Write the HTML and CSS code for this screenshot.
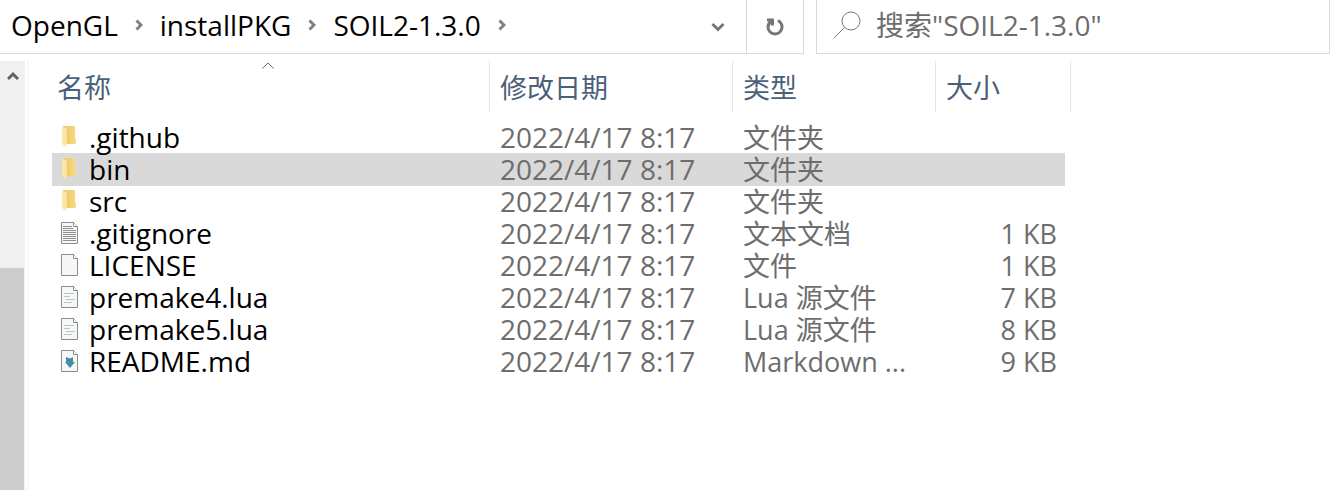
FILE: index.html
```html
<!DOCTYPE html>
<html lang="zh-CN">
<head>
<meta charset="utf-8">
<title>SOIL2-1.3.0</title>
<link rel="stylesheet" href="styles.css">
</head>
<body>
<svg class="defs" aria-hidden="true">
  <defs>
    <linearGradient id="front" x1="0" x2="1"><stop offset="0" stop-color="#ffe9a2"/><stop offset="1" stop-color="#fce49a"/></linearGradient>
    <linearGradient id="back" x1="0" x2="1"><stop offset="0" stop-color="#e8c468"/><stop offset="1" stop-color="#fbda7c"/></linearGradient>
  </defs>
  <symbol id="folder" viewBox="0 0 18 22">
    <path fill="url(#back)" d="M2 0H14V12L15 13V18H4Z"/>
    <path fill="url(#front)" d="M1 0L5 2Q6 2.500 6 4V17L5 18V21L1 18Z"/>
  </symbol>
  <symbol id="page" viewBox="0 0 18 22">
    <path fill="#f6f7f7" stroke="#8c8c8c" d="M.5.500H12.500L16.500 4.500V21.500H.5Z"/>
    <path fill="#fff" stroke="#8c8c8c" d="M12.500.500V4.500H16.500"/>
  </symbol>
  <symbol id="text" viewBox="0 0 18 22">
    <use href="#page"/>
    <path stroke="#8f8f8f" d="M2 4.500H11M2 6.500H12M2 8.500H15M2 10.500H15M2 12.500H15M2 14.500H15M2 16.500H15M2 18.500H15"/>
  </symbol>
  <symbol id="code" viewBox="0 0 18 22">
    <use href="#page"/>
    <path stroke="#bfc4c4" d="M3 7.500H13M3 10.500H9M5 13.500H14M3 16.500H11"/>
  </symbol>
  <symbol id="markdown" viewBox="0 0 18 22">
    <use href="#page"/>
    <path fill="#458bab" d="M5 7L9 8.500L12 7V12H14L9 18L4 12H5Z"/>
  </symbol>
</svg>
<header class="toolbar">
  <div class="address">
    <nav class="crumbs">
      <a href="#">OpenGL</a>
      <svg class="chevron" viewBox="0 0 8 12"><path d="M1.500 1.500L6 6L1.500 10.500"/></svg>
      <a href="#">installPKG</a>
      <svg class="chevron" viewBox="0 0 8 12"><path d="M1.500 1.500L6 6L1.500 10.500"/></svg>
      <a href="#">SOIL2-1.3.0</a>
      <svg class="chevron" viewBox="0 0 8 12"><path d="M1.500 1.500L6 6L1.500 10.500"/></svg>
    </nav>
    <button class="history" aria-label="以前的位置"><svg width="14" height="10" viewBox="0 0 14 10"><path d="M1.500 2L7 7.500L12.500 2"/></svg></button>
    <button class="refresh" aria-label="刷新"><svg width="18" height="18" viewBox="0 0 18 18"><path d="M1 2H6.500V7.500M5.500 3Q2 5.500 2 9A7 7 0 0 0 16 9Q16 5 12 2.500"/></svg></button>
  </div>
  <label class="search">
    <svg width="28" height="28" viewBox="0 0 28 28"><circle cx="18" cy="10" r="9"/><path d="M11.500 16.500L1 27"/></svg>
    <input type="search" aria-label="搜索" placeholder="搜索&quot;SOIL2-1.3.0&quot;">
  </label>
</header>
<main class="content">
  <div class="scrollbar">
    <button class="up" aria-label="向上滚动"><svg width="12" height="10" viewBox="0 0 12 10"><path d="M1 8L6 3L11 8"/></svg></button>
    <div class="thumb"></div>
  </div>
  <section class="files">
    <table>
      <colgroup><col class="name-col"><col class="date-col"><col class="type-col"><col class="size-col"><col class="end-col"></colgroup>
      <thead>
        <tr><th>名称<svg class="sort" viewBox="0 0 12 7"><path d="M.5 6.500L6 1L11.500 6.500"/></svg></th><th>修改日期</th><th>类型</th><th colspan="2">大小</th></tr>
      </thead>
      <tbody>
        <tr><td><div class="name"><svg><use href="#folder"/></svg>.github</div></td><td>2022/4/17 8:17</td><td>文件夹</td><td></td></tr>
        <tr class="selected"><td><div class="name"><svg><use href="#folder"/></svg>bin</div></td><td>2022/4/17 8:17</td><td>文件夹</td><td></td></tr>
        <tr><td><div class="name"><svg><use href="#folder"/></svg>src</div></td><td>2022/4/17 8:17</td><td>文件夹</td><td></td></tr>
        <tr><td><div class="name"><svg><use href="#text"/></svg>.gitignore</div></td><td>2022/4/17 8:17</td><td>文本文档</td><td>1 KB</td></tr>
        <tr><td><div class="name"><svg><use href="#page"/></svg>LICENSE</div></td><td>2022/4/17 8:17</td><td>文件</td><td>1 KB</td></tr>
        <tr><td><div class="name"><svg><use href="#code"/></svg>premake4.lua</div></td><td>2022/4/17 8:17</td><td>Lua 源文件</td><td>7 KB</td></tr>
        <tr><td><div class="name"><svg><use href="#code"/></svg>premake5.lua</div></td><td>2022/4/17 8:17</td><td>Lua 源文件</td><td>8 KB</td></tr>
        <tr><td><div class="name"><svg><use href="#markdown"/></svg>README.md</div></td><td>2022/4/17 8:17</td><td>Markdown ...</td><td>9 KB</td></tr>
      </tbody>
    </table>
  </section>
</main>
</body>
</html>
```
FILE: styles.css
```css
* { box-sizing: border-box; }
body {
  margin: 0;
  min-height: 100vh;
  display: flex;
  flex-direction: column;
  background: #fff;
  color: #000;
  font: 27px/32px "Open Sans", "Noto Sans CJK SC", sans-serif;
}
svg { display: block; flex: none; fill: none; }
button { border: 0; padding: 0; background: none; display: grid; place-items: center; }
.defs { position: absolute; width: 0; height: 0; }

.toolbar { display: grid; grid-template-columns: 804fr 514fr; gap: 12px; padding-right: 12px; height: 54px; font-size: 28px; }
.address { display: flex; border: solid #d9d9d9; border-width: 0 1px 1px 0; }
.crumbs { flex: 1; display: flex; align-items: center; gap: 17px; padding: 0 0 4px 11px; }
.crumbs a { color: inherit; text-decoration: none; }
.chevron { width: 8px; height: 12px; stroke: #808080; stroke-width: 3; }
.history { width: 56px; }
.history svg { stroke: #767676; stroke-width: 3; }
.refresh { width: 57px; border-left: 1px solid #d9d9d9; }
.refresh svg { stroke: #767676; stroke-width: 3; }
.search { display: flex; align-items: center; gap: 15px; padding: 0 0 4px 16px; border: 1px solid #d9d9d9; border-top: 0; }
.search svg { stroke: #767676; stroke-width: 1; }
.search input { flex: 1; min-width: 0; border: 0; outline: 0; padding: 0; background: none; font: inherit; height: 40px; }
.search input::placeholder { color: #6d6d6d; opacity: 1; }

.content { flex: 1; display: flex; gap: 2px; padding-top: 7px; }
.scrollbar { width: 25px; background: #f0f0f0; display: flex; flex-direction: column; }
.up { height: 30px; width: 100%; }
.up svg { stroke: #606060; stroke-width: 3; }
.thumb { flex: 1; margin: 177px 1px 0 0; background: #cdcdcd; }
.files { flex: 1; min-width: 0; border-left: 2px solid #f7f7f7; padding-left: 23px; }

table { width: 1019px; table-layout: fixed; border-collapse: separate; border-spacing: 0; }
.name-col { width: 438px; }
.date-col { width: 243px; }
.type-col { width: 203px; }
.size-col { width: 129px; }
.end-col { width: 6px; }
th { position: relative; height: 51px; padding: 2px 10px 0; border-right: 1px solid #e5e5e5; text-align: left; font-weight: 400; color: #4c607a; }
th:first-child { padding-left: 5px; }
.sort { position: absolute; top: 1px; left: calc(50% - 9px); width: 12px; height: 7px; stroke: #6d6d6d; }
tbody::before { content: ""; display: block; height: 10px; }
td { height: 32px; padding: 0 10px; color: #6d6d6d; white-space: nowrap; vertical-align: top; }
td:first-child, td:nth-child(2) { font-size: 28px; line-height: 30px; }
td:first-child { padding-left: 9px; color: #000; }
td:nth-child(4) { text-align: right; padding-right: 8px; }
.selected td { background: #d9d9d9; box-shadow: 0 -1px #d9d9d9; }
.name { display: flex; align-items: center; gap: 10px; }
.name svg { width: 18px; height: 22px; }
```
